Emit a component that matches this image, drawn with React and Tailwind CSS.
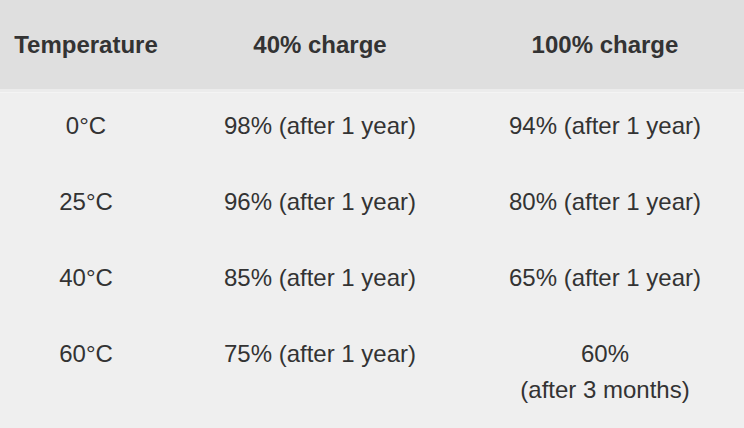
export default function App() {
  const rows = [
    ["0°C", "98% (after 1 year)", "94% (after 1 year)"],
    ["25°C", "96% (after 1 year)", "80% (after 1 year)"],
    ["40°C", "85% (after 1 year)", "65% (after 1 year)"],
    ["60°C", "75% (after 1 year)", ["60%", "(after 3 months)"]],
  ];
  const font = { fontFamily: '"Liberation Sans", Arial, sans-serif' };
  return (
    <div className="w-[744px] h-[428px] bg-[#efefef] text-[#333333] overflow-hidden" style={font}>
      <div className="grid grid-cols-[172px_296px_274px] h-[89px] bg-[#dfdfdf] items-center text-center font-bold text-[24px] leading-[36px]">
        <div>Temperature</div>
        <div>40% charge</div>
        <div>100% charge</div>
      </div>
      <div className="h-[4px] border-b border-[#f4f4f4] bg-[#ececec]" />
      <div className="-mt-[5px]">
        {rows.map((r, i) => (
          <div key={i} className="grid grid-cols-[172px_296px_274px] py-5 text-center text-[24px] leading-[36px]">
            <div>{r[0]}</div>
            <div>{r[1]}</div>
            <div>
              {Array.isArray(r[2]) ? (
                <>
                  <div>{r[2][0]}</div>
                  <div>{r[2][1]}</div>
                </>
              ) : (
                r[2]
              )}
            </div>
          </div>
        ))}
      </div>
    </div>
  );
}
